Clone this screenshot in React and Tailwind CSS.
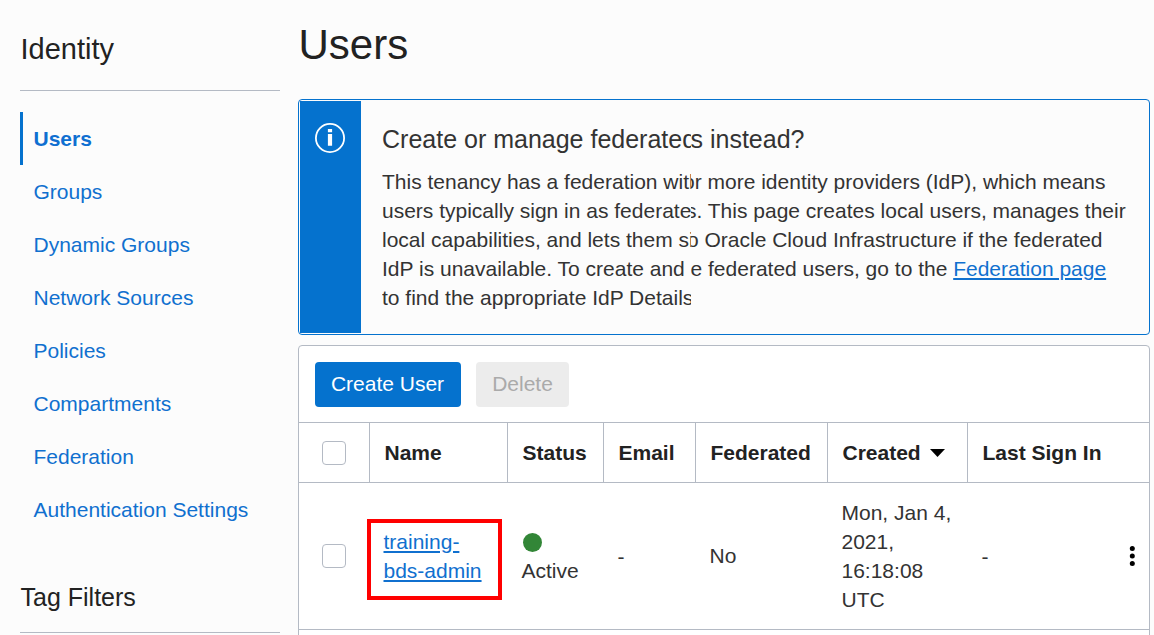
const navItems = ['Users', 'Groups', 'Dynamic Groups', 'Network Sources', 'Policies', 'Compartments', 'Federation', 'Authentication Settings'];

function Line({ start, shift = '', children }) {
  return (
    <div className="flex">
      <span className="w-[309px] shrink-0 overflow-hidden">{start}</span>
      {children && <span className="flex-1 overflow-hidden"><span className={`block ${shift}`}>{children}</span></span>}
    </div>
  );
}

function Checkbox() {
  return <span className="size-6 rounded-[4px] border border-[#b4bac4] bg-white" />;
}

function InfoIcon() {
  return (
    <svg className="size-[30px]" viewBox="0 0 30 30" fill="none">
      <circle cx="15" cy="15" r="14.1" stroke="#fff" strokeWidth="1.8" />
      <path d="M12.900 6h4.200v3.200h-4.200zM12.900 11h4.200v11.700h-4.200z" fill="#fff" />
    </svg>
  );
}

const cols = 'grid grid-cols-[70px_138px_96px_92px_132px_140px_182px]';

export default function App() {
  return (
    <div className="flex h-[635px] w-[1154px] overflow-hidden whitespace-nowrap bg-[#fcfcfc] font-['Liberation_Sans',Arial,sans-serif] text-[21px] leading-[29px] text-[#333]">
      <aside className="ml-5 w-[260px] shrink-0">
        <h2 className="flex h-[91px] items-center border-b border-[#b4bac4] pl-[0.5px] pt-[9px] text-[29px] text-[#222]">Identity</h2>
        <nav className="mt-[21px]">
          {navItems.map((t, i) => (
            <a key={t} className={i === 0 ? 'flex h-[53px] items-center border-l-[3px] border-[#0572ce] pl-[10.5px] font-bold text-[#0f6fd1]' : 'flex h-[53px] items-center pl-[13.5px] text-[#1070cf]'}>{t}</a>
          ))}
        </nav>
        <h2 className="flex h-[97px] items-center border-b border-[#b4bac4] pl-[0.5px] pt-[27px] text-[25px] text-[#222]">Tag Filters</h2>
      </aside>
      <main className="ml-[18px] w-[852px] shrink-0">
        <h1 className="flex h-[99px] items-center pb-[11px] pl-[0.5px] text-[42px] text-[#222]">Users</h1>
        <section className="flex h-[236px] rounded-[4px] border border-[#0572ce] p-px">
          <div className="w-[61px] bg-[#0572ce] pl-[15px] pt-[22px]"><InfoIcon /></div>
          <div className="flex-1 pl-[21px] pt-6">
            <div className="mb-[13px] text-[25px]"><Line start="Create or manage federated" shift="-ml-[0.5px]">s instead?</Line></div>
            <Line start="This tenancy has a federation with" shift="-ml-[8px]">or more identity providers (IdP), which means</Line>
            <Line start="users typically sign in as federate" shift="-ml-[5px]">s. This page creates local users, manages their</Line>
            <Line start="local capabilities, and lets them si" shift="-ml-[4px]">o Oracle Cloud Infrastructure if the federated</Line>
            <Line start="IdP is unavailable. To create and" shift="-ml-[0.5px]">e federated users, go to the <a className="text-[#1070cf] underline decoration-2 underline-offset-2">Federation page</a></Line>
            <Line start="to find the appropriate IdP Details" />
          </div>
        </section>
        <section className="mt-[10px] h-[320px] rounded-t-[4px] border border-[#b4bac4] bg-white">
          <div className="flex h-[76px] gap-[15px] pl-4 pt-4">
            <button className="h-[45px] w-[146px] rounded-[4px] bg-[#0572ce] pb-[2px] pr-px text-white">Create User</button>
            <button className="h-[45px] w-[93px] rounded-[4px] bg-[#ececec] pb-[2px] text-[#aaa]">Delete</button>
          </div>
          <div className={`${cols} h-[61px] border-y border-[#b4bac4] font-bold text-[#222]`}>
            <div className="flex items-center pl-[23px]"><Checkbox /></div>
            {['Name', 'Status', 'Email', 'Federated', 'Created', 'Last Sign In'].map((h) => (
              <div key={h} className="flex items-center border-l border-[#b4bac4] pl-[14.5px]">
                {h}
                {h === 'Created' && <svg className="ml-[9px] h-2 w-[15px]" viewBox="0 0 15 8"><path d="M0 0h15L7.500 8z" fill="#000" /></svg>}
              </div>
            ))}
          </div>
          <div className={`${cols} h-[147px] items-center border-b border-[#b4bac4]`}>
            <div className="flex pl-[23px]"><Checkbox /></div>
            <div className="-ml-[2px] mt-[6px] h-[81px] w-[135px] border-4 border-[#f00] pl-[12.5px] pt-1">
              <a className="text-[#1070cf] underline decoration-2 underline-offset-2">training-<br />bds-admin</a>
            </div>
            <div className="pl-[14.5px]"><div className="flex h-[29px] items-center pl-px pt-px"><span className="size-[19px] rounded-full bg-[#328637]" /></div>Active</div>
            <div className="pl-[14.5px]">-</div>
            <div className="pb-[2px] pl-[14.5px]">No</div>
            <div className="pl-[14.5px]">Mon, Jan 4,<br />2021,<br />16:18:08<br />UTC</div>
            <div className="flex items-center justify-between pl-[14.5px] pr-[14px]">
              <span>-</span>
              <svg className="h-5 w-[6px]" viewBox="0 0 6 20"><circle cx="3.300" cy="2.500" r="2.500" /><circle cx="3.300" cy="10" r="2.500" /><circle cx="3.300" cy="17.500" r="2.500" /></svg>
            </div>
          </div>
        </section>
      </main>
    </div>
  );
}
